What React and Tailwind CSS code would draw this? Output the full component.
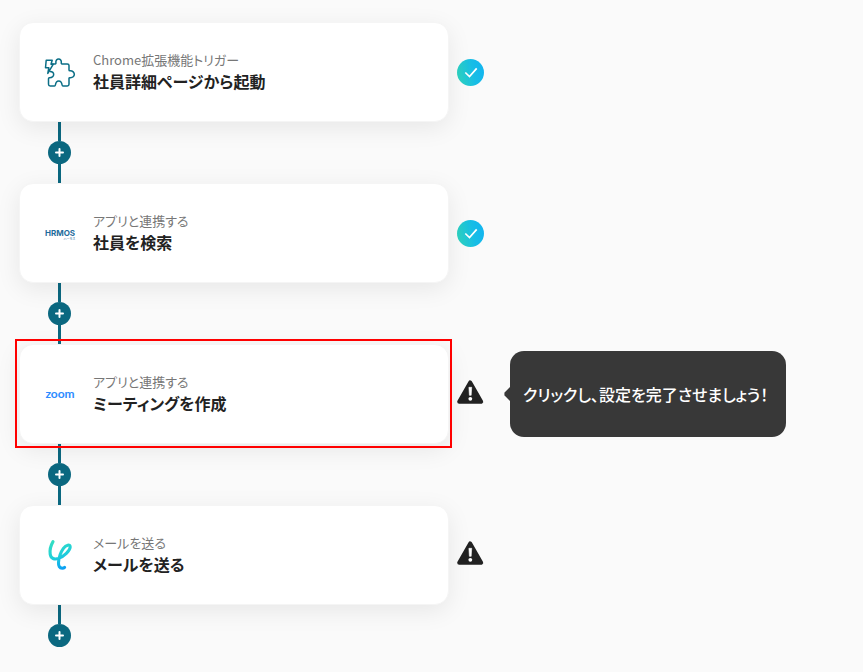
import { useState } from "react";
import clsx from "clsx";

const STEPS = [
  { id: 1, app: "chrome", kind: "Chrome拡張機能トリガー", title: "社員詳細ページから起動", done: true },
  { id: 2, app: "hrmos", kind: "アプリと連携する", title: "社員を検索", done: true },
  { id: 3, app: "zoom", kind: "アプリと連携する", title: "ミーティングを作成", done: false, hint: "クリックし、設定を完了させましょう！" },
  { id: 4, app: "yoom", kind: "メールを送る", title: "メールを送る", done: false },
];

function AppIcon({ app }) {
  if (app === "chrome") {
    return (
      <svg viewBox="0 0 32 32" className="size-8" fill="none" stroke="#0b6e86" strokeWidth="1.5" strokeLinejoin="round" strokeLinecap="round" aria-hidden="true">
        <path d="M2.2 4.2H8.2L7 8.2H9.3L3.8 17.4L4.8 11.8H1.5Z" />
        <path d="M8 7.9H11.2C11.8 7.9 12 7.5 11.9 7C11.1 1.6 18.1 1.6 17.3 7C17.2 7.5 17.4 7.9 18 7.9H23.3Q25 7.9 25 9.6V14C25 14.6 25.4 14.8 25.9 14.8C31.8 14.5 31.8 22.2 25.9 21.7C25.4 21.6 25 21.9 25 22.4V28.2Q25 29.9 23.3 29.9H19C18.4 29.9 18.2 29.6 18.1 29C17.4 23.6 12.1 23.6 11.4 29C11.3 29.6 11.1 29.9 10.5 29.9H6.2Q4.5 29.9 4.5 28.2V22.7C4.5 22.1 4.8 21.9 5.4 21.8C11.2 21.3 10.8 15.6 6 15.4" />
      </svg>
    );
  }
  if (app === "hrmos") {
    return (
      <span className="flex flex-col items-end pt-1 font-['Inter',sans-serif] text-[8px] leading-2 font-bold text-[#1e6c9c]">
        HRMOS
        <span className="pt-px font-['Noto_Sans_CJK_JP',sans-serif] text-[3px] leading-[3px] font-normal">ハーモス</span>
      </span>
    );
  }
  if (app === "zoom") {
    return <span className="font-['Lato',sans-serif] text-[12px] leading-3 font-bold text-[#2d8cff]">zoom</span>;
  }
  return (
    <svg viewBox="0 0 32 32" className="size-8" fill="none" aria-hidden="true">
      <defs>
        <linearGradient id="yoom-mark" x1="6" y1="2" x2="18" y2="31" gradientUnits="userSpaceOnUse">
          <stop offset="0" stopColor="#35dfc0" />
          <stop offset="0.55" stopColor="#1fcfda" />
          <stop offset="1" stopColor="#0a9df5" />
        </linearGradient>
      </defs>
      <path
        d="M9 2.6C6.8 6.4 5.6 11.2 6.2 15.2C6.9 19.6 10.4 20.8 14.6 19.4C20 17.6 26 11.8 26.2 8C26.2 4.8 22 5.8 19.4 9.4C16.4 13.6 14.8 19 14.5 23.4C14.3 27 15.6 29.2 18.2 29.2C19.2 29.2 20 28.9 20.6 28.3"
        stroke="url(#yoom-mark)"
        strokeWidth="3.1"
        strokeLinecap="round"
        strokeLinejoin="round"
      />
    </svg>
  );
}

function StatusIcon({ done }) {
  if (done) {
    return (
      <svg viewBox="0 0 27 27" className="size-[27px]" fill="none" role="img" aria-label="設定済み">
        <defs>
          <linearGradient id="done-fill" x1="0" y1="16" x2="27" y2="10" gradientUnits="userSpaceOnUse">
            <stop offset="0" stopColor="#2ed3c0" />
            <stop offset="0.6" stopColor="#17bde5" />
            <stop offset="1" stopColor="#12b5f0" />
          </linearGradient>
        </defs>
        <circle cx="13.5" cy="13.5" r="13.5" fill="url(#done-fill)" />
        <path d="M8.3 13.5L12.5 17.6L19.7 9.4" stroke="#fff" strokeWidth="1.7" />
      </svg>
    );
  }
  return (
    <svg viewBox="0 0 27 27" className="size-[27px] overflow-visible" role="img" aria-label="未設定">
      <path d="M13.2 1.4L24.2 20.8H2.2Z" fill="#222" stroke="#222" strokeWidth="4" strokeLinejoin="round" />
      <path d="M11.9 6.3H14.7L14.2 14.3H12.4Z" fill="#fff" stroke="#fff" strokeWidth="0.6" strokeLinejoin="round" />
      <circle cx="13.3" cy="17.8" r="1.9" fill="#fff" />
    </svg>
  );
}

function Connector({ last, onAdd }) {
  return (
    <div className="ml-[29px] flex w-[23px] flex-col items-center">
      <span className="h-[19px] w-[3px] bg-[#0b6880]" />
      <button type="button" aria-label="ステップを追加" onClick={onAdd} className="flex size-[23px] items-center justify-center rounded-full bg-[#0b6880]">
        <svg viewBox="0 0 9 9" className="size-[9px]" stroke="#fff" strokeWidth="2" strokeLinecap="round" aria-hidden="true">
          <path d="M4.5 1V8M1 4.5H8" />
        </svg>
      </button>
      {!last && <span className="h-[19px] w-[3px] bg-[#0b6880]" />}
    </div>
  );
}

function Step({ step, active, onSelect }) {
  return (
    <div className="flex items-center">
      <div className="relative w-[430px] shrink-0">
        <button
          type="button"
          onClick={onSelect}
          className="flex h-[100px] w-full items-center rounded-[14px] border border-[#f5f5f5] bg-white pl-6 text-left shadow-[0_6px_24px_rgba(0,0,0,0.08)]"
        >
          <span className="flex size-8 shrink-0 items-center justify-center">
            <AppIcon app={step.app} />
          </span>
          <span className="ml-[17px] flex flex-col">
            <span className="text-[13px] leading-[18px] text-[#777]">{step.kind}</span>
            <span className="text-base leading-6 font-bold text-[#222]">{step.title}</span>
          </span>
        </button>
        {active && <span className="pointer-events-none absolute -top-[5px] -right-[3px] -bottom-1 -left-1 z-10 border-2 border-[#f00]" />}
      </div>
      <span className="ml-2 flex shrink-0">
        <StatusIcon done={step.done} />
      </span>
      {step.hint && (
        <div role="tooltip" className="ml-5 flex shrink-0 items-center">
          <svg viewBox="0 0 6 14" className="h-[14px] w-[6px]" aria-hidden="true">
            <path d="M6 0V14L0.6 8.4Q0 7 0.6 5.6Z" fill="#383838" />
          </svg>
          <p className="min-w-[276px] rounded-[14px] bg-[#383838] px-[13px] py-[31px] text-base leading-6 font-medium whitespace-nowrap text-white">{step.hint}</p>
        </div>
      )}
    </div>
  );
}

export default function App() {
  const [activeId, setActiveId] = useState(3);
  const [, setInsertAfter] = useState(null);

  return (
    <main
      lang="ja"
      className="min-h-screen bg-[#fafafa] pt-[22px] pb-6 pl-[19px] font-['Noto_Sans_CJK_JP',sans-serif] [font-feature-settings:'palt']"
    >
      <ol>
        {STEPS.map((step, i) => (
          <li key={step.id} className={clsx("relative", step.id === activeId && "z-10")}>
            <Step step={step} active={step.id === activeId} onSelect={() => setActiveId(step.id)} />
            <Connector last={i === STEPS.length - 1} onAdd={() => setInsertAfter(step.id)} />
          </li>
        ))}
      </ol>
    </main>
  );
}
